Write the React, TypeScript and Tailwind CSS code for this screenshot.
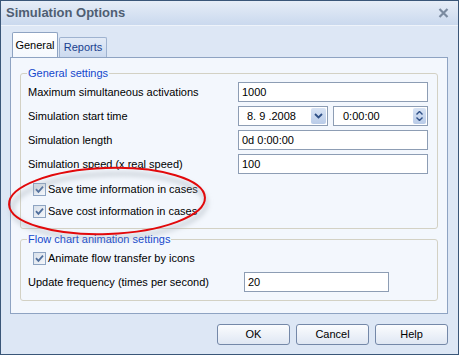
import React from 'react';

const font = { fontFamily: '"Liberation Sans", Arial, sans-serif' };

function Check({ label }: { label: string }) {
  return (
    <div className="flex h-[22px] items-center pl-[12px]">
      <div className="flex h-[13px] w-[13px] items-center justify-center border border-[#8ea4c2] bg-gradient-to-br from-[#d8e0ea] to-[#f4f6fa]">
        <svg width="9" height="9" viewBox="0 0 9 9">
          <path d="M1 4.2 L3.4 6.8 L8 1.6" fill="none" stroke="#4f6e9c" strokeWidth="1.8" />
        </svg>
      </div>
      <span className="ml-[2px] text-[11px] text-black">{label}</span>
    </div>
  );
}

function Field({ label, value, w = 'w-[190px]' }: { label: string; value: string; w?: string }) {
  return (
    <div className="flex h-[20px] items-center">
      <span className="w-[210px] text-[11px] text-black">{label}</span>
      <div className={`flex h-[20px] ${w} items-center border border-[#8d9db4] bg-white pl-[3px] text-[11px] text-black`}>
        {value}
      </div>
    </div>
  );
}

function Btn({ label }: { label: string }) {
  return (
    <button className="flex h-[21px] w-[73px] items-center justify-center rounded-[3px] border border-[#7488a8] bg-gradient-to-b from-[#fbfcfe] to-[#dfe7f3] text-[11px] text-black">
      {label}
    </button>
  );
}

export default function App() {
  return (
    <div style={font} className="relative h-[355px] w-[459px] overflow-hidden border border-[#3a5678] bg-[#dde7f5]">
      {/* title bar */}
      <div className="flex h-[25px] items-center justify-between border-b border-[#eef3fa] bg-gradient-to-b from-[#e6edf7] to-[#cad9ee] pl-[5px] pr-[9px]">
        <span className="text-[13px] font-bold text-[#4f5e72]">Simulation Options</span>
        <svg width="11" height="10" viewBox="0 0 11 10">
          <path d="M1.5 1 L9.5 9 M9.5 1 L1.5 9" stroke="#7b8ba0" strokeWidth="2.2" />
        </svg>
      </div>

      <div className="flex flex-col pl-[9px] pr-[10px] pt-[7px]">
        {/* tabs */}
        <div className="relative z-10 flex h-[24px] items-end pl-[2px]">
          <div className="flex h-[25px] w-[46px] items-center justify-center rounded-t-[2px] border border-b-0 border-[#8ea3c2] bg-gradient-to-b from-white to-[#f4f8fd] text-[11px] text-black">
            General
          </div>
          <div className="ml-[1px] flex h-[20px] w-[48px] items-center justify-center rounded-t-[2px] border border-b-0 border-[#9fb3d0] bg-gradient-to-b from-[#e3ebf7] to-[#ccdaef] text-[11px] text-[#1a3f8f]">
            Reports
          </div>
        </div>

        {/* panel */}
        <div className="flex h-[257px] flex-col border border-[#8ea3c2] bg-[#f3f7fd] px-[9px] pt-[9px]">
          <fieldset className="rounded-[3px] border border-[#d3d1c4] pb-[6px] pl-[7px]">
            <legend className="-ml-[1px] px-[1px] text-[11px] leading-[13px] text-[#1447cc]">General settings</legend>
            <div className="mt-[2px] flex flex-col gap-[4px]">
              <Field label="Maximum simultaneous activations" value="1000" />
              <div className="flex h-[20px] items-center">
                <span className="w-[210px] text-[11px] text-black">Simulation start time</span>
                <div className="flex h-[20px] w-[90px] items-center justify-between border border-[#8d9db4] bg-white pl-[8px] pr-[1px] text-[11px] text-black">
                  <span>8. 9 .2008</span>
                  <div className="flex h-[16px] w-[15px] items-center justify-center rounded-[2px] bg-gradient-to-b from-[#d8e3f4] to-[#b9cbe8]">
                    <svg width="9" height="6" viewBox="0 0 9 6">
                      <path d="M1 1 L4.5 4.5 L8 1" fill="none" stroke="#2e4f86" strokeWidth="1.8" />
                    </svg>
                  </div>
                </div>
                <div className="ml-[5px] flex h-[20px] w-[95px] items-center justify-between border border-[#8d9db4] bg-white pl-[9px] pr-[1px] text-[11px] text-black">
                  <span>0:00:00</span>
                  <div className="flex h-[16px] w-[13px] flex-col items-center justify-center gap-[2px] rounded-[2px] bg-gradient-to-b from-[#d8e3f4] to-[#b9cbe8]">
                    <svg width="7" height="4" viewBox="0 0 7 4">
                      <path d="M0.5 3.5 L3.5 0.5 L6.5 3.5" fill="none" stroke="#2e4f86" strokeWidth="1.4" />
                    </svg>
                    <svg width="7" height="4" viewBox="0 0 7 4">
                      <path d="M0.5 0.5 L3.5 3.5 L6.5 0.5" fill="none" stroke="#2e4f86" strokeWidth="1.4" />
                    </svg>
                  </div>
                </div>
              </div>
              <Field label="Simulation length" value="0d 0:00:00" />
              <Field label="Simulation speed (x real speed)" value="100" />
            </div>
            <div className="mt-[4px] -ml-[7px] flex flex-col">
              <Check label="Save time information in cases" />
              <Check label="Save cost information in cases" />
            </div>
          </fieldset>

          <fieldset className="mt-[4px] rounded-[3px] border border-[#d3d1c4] pb-[8px] pl-[7px]">
            <legend className="-ml-[1px] px-[1px] text-[11px] leading-[13px] text-[#1447cc]">Flow chart animation settings</legend>
            <div className="-ml-[7px] mt-[1px]">
              <Check label="Animate flow transfer by icons" />
            </div>
            <div className="mt-[3px] flex h-[20px] items-center">
              <span className="w-[216px] text-[11px] text-black">Update frequency (times per second)</span>
              <div className="flex h-[20px] w-[145px] items-center border border-[#8d9db4] bg-white pl-[3px] text-[11px] text-black">
                20
              </div>
            </div>
          </fieldset>
        </div>

        {/* buttons */}
        <div className="mt-[10px] flex justify-end gap-[6px]">
          <Btn label="OK" />
          <Btn label="Cancel" />
          <Btn label="Help" />
        </div>
      </div>

      {/* red annotation ellipse */}
      <svg className="pointer-events-none absolute left-0 top-0" width="459" height="355" viewBox="0 0 459 355">
        <defs>
          <filter id="blur" x="-20%" y="-20%" width="140%" height="140%">
            <feGaussianBlur stdDeviation="2.5" />
          </filter>
        </defs>
        <ellipse cx="108" cy="205" rx="97" ry="32" transform="rotate(-2 108 205)" fill="none" stroke="#9aa3ad" strokeOpacity="0.45" strokeWidth="4" filter="url(#blur)" />
        <ellipse cx="106" cy="200" rx="98" ry="33" transform="rotate(-2 106 200)" fill="none" stroke="#e2090b" strokeWidth="2" />
      </svg>
    </div>
  );
}
